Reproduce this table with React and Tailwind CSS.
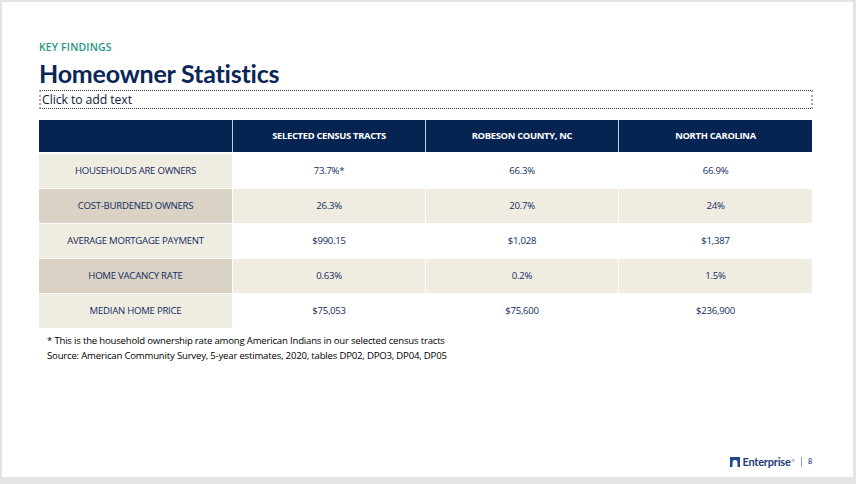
import React from "react";

const rows = [
  { label: "HOUSEHOLDS ARE OWNERS", a: "73.7%*", b: "66.3%", c: "66.9%", shade: false },
  { label: "COST-BURDENED OWNERS", a: "26.3%", b: "20.7%", c: "24%", shade: true },
  { label: "AVERAGE MORTGAGE PAYMENT", a: "$990.15", b: "$1,028", c: "$1,387", shade: false },
  { label: "HOME VACANCY RATE", a: "0.63%", b: "0.2%", c: "1.5%", shade: true },
  { label: "MEDIAN HOME PRICE", a: "$75,053", b: "$75,600", c: "$236,900", shade: false },
];

const heads = ["SELECTED CENSUS TRACTS", "ROBESON COUNTY, NC", "NORTH CAROLINA"];

function Logo() {
  return (
    <div className="flex items-center text-[#1d3c78]" style={{ fontFamily: "Lato, sans-serif" }}>
      <svg width="10" height="10" viewBox="0 0 10 10" className="mr-[2px]">
        <path d="M0 0H10V10H7.5V5.5A2.5 2.5 0 0 0 2.5 5.5V10H0Z" fill="#1d4a8c" />
      </svg>
      <span className="text-[11px] font-bold tracking-[-0.2px] leading-none">Enterprise</span>
      <span className="text-[4px] self-start mt-[2px] ml-[1px]">®</span>
      <span className="mx-[6px] h-[10px] w-px bg-[#8aa0c0]" />
      <span className="text-[7px] font-semibold">8</span>
    </div>
  );
}

export default function App() {
  return (
    <div
      className="w-[856px] h-[484px] bg-[#e4e4e4] pt-[2px] pl-[2px] pr-[3px] pb-[7px]"
      style={{ fontFamily: "'Open Sans', Lato, sans-serif" }}
    >
      <div className="bg-white h-full flex flex-col pl-[37px] pr-[40px]">
        <div className="mt-[40px] text-[10.4px] font-semibold tracking-[0.2px] text-[#1f9383] leading-none">KEY FINDINGS</div>
        <h1
          className="mt-[9px] text-[25px] font-bold text-[#0a2657] leading-none tracking-[-0.2px]"
          style={{ fontFamily: "Lato, sans-serif" }}
        >
          Homeowner Statistics
        </h1>
        <div className="mt-[4px] h-[19px] border-y border-dotted border-[#333] border-x-2 border-x-[#aaa] border-x-dashed flex items-center">
          <span className="text-[12.3px] text-[#14203a] leading-none pl-[1px] tracking-[-0.1px]">Click to add text</span>
        </div>

        <div className="mt-[11px] grid grid-cols-[193px_192px_192px_193px] gap-x-px">
          <div className="h-[32px] bg-[#062452]" />
          {heads.map((h) => (
            <div key={h} className="h-[32px] bg-[#062452] flex items-center justify-center text-white text-[9.4px] font-bold tracking-[-0.3px] shadow-[-1px_0_0_#c5cedb]">
              {h}
            </div>
          ))}
        </div>

        <div className="mt-[2px] flex flex-col gap-y-px">
          {rows.map((r) => (
            <div key={r.label} className="grid grid-cols-[193px_192px_192px_193px] gap-x-px text-[#132c5e] text-[9.6px] tracking-[-0.25px]">
              <div className={`h-[34px] flex items-center justify-center ${r.shade ? "bg-[#d9d2c5]" : "bg-[#efece2]"}`}>
                {r.label}
              </div>
              {[r.a, r.b, r.c].map((v, i) => (
                <div key={i} className={`h-[34px] flex items-center justify-center ${r.shade ? "bg-[#f0ece2]" : "bg-white"}`}>
                  {v}
                </div>
              ))}
            </div>
          ))}
        </div>

        <div className="mt-[5px] pl-[8px] text-[9.6px] leading-[15px] text-black tracking-[-0.2px]">
          <p>* This is the household ownership rate among American Indians in our selected census tracts</p>
          <p>Source: American Community Survey, 5-year estimates, 2020, tables DP02, DPO3, DP04, DP05</p>
        </div>

        <div className="mt-auto mb-[10px] flex justify-end pr-[1px]">
          <Logo />
        </div>
      </div>
    </div>
  );
}
